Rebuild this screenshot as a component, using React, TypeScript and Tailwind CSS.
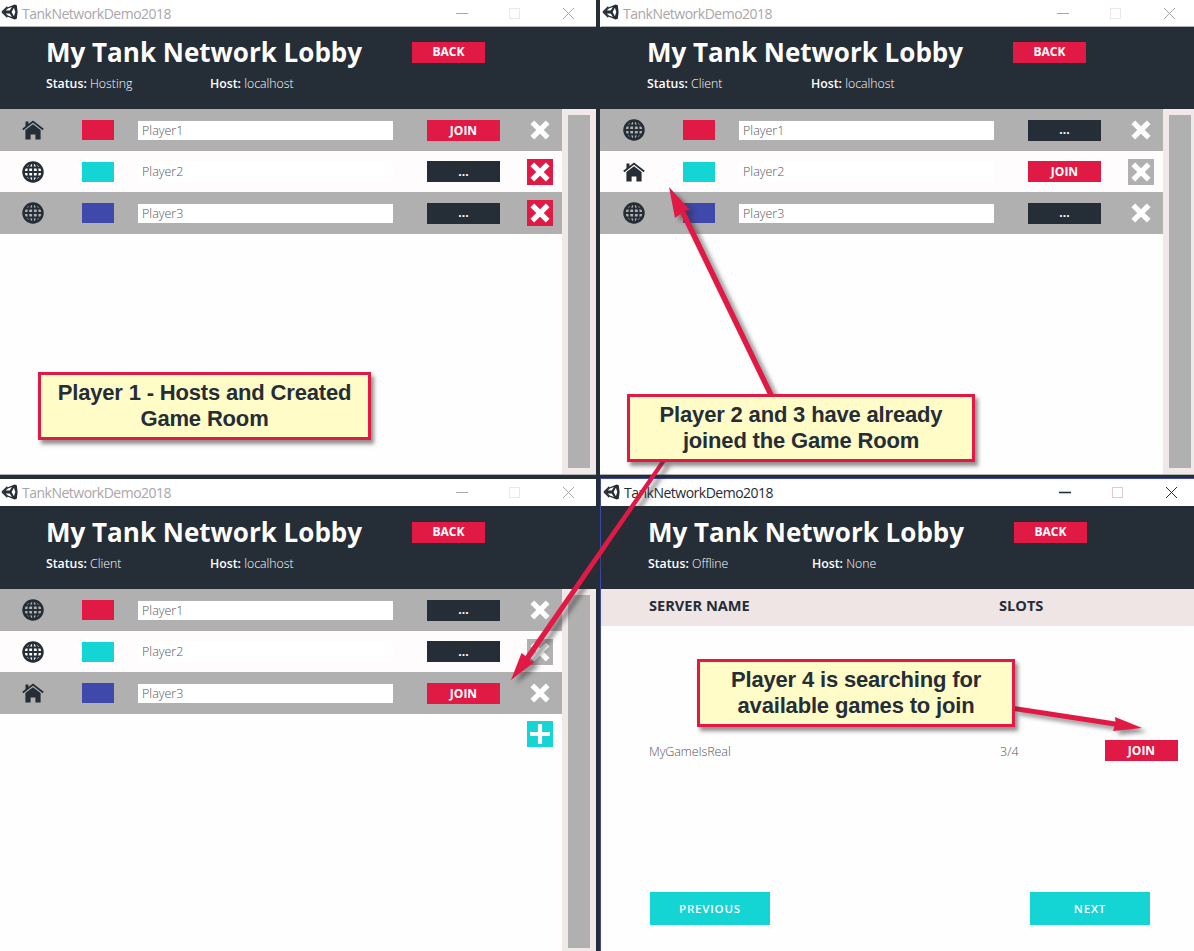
import type { ReactNode } from "react";

type Kind = "home" | "globe";
type Cross = "plain" | "red" | "gray";

interface Player {
  kind: Kind;
  color: string;
  name: string;
  action: "JOIN" | "...";
  cross: Cross;
}

function UnityIcon() {
  return (
    <svg viewBox="0 0 18 18" className="size-[18px] shrink-0" fill="none" stroke="#252d36">
      <path d="M1.6 9 6.2 4.6 13.6 1.6 15.8 2.2 16.6 9 15.8 15.8 13.6 16.4 6.2 13.4z" fill="#252d36" stroke="none" />
      <path d="M4.8 7.6 8.7 7.6 11 3.9 6.9 5.600z" fill="#fff" stroke="none" />
      <path d="M4.8 10.4 8.7 10.4 11 14.100 6.9 12.4z" fill="#fff" stroke="none" />
      <path d="M12.9 4.800 10.6 9 12.9 13.2 14.3 9z" fill="#fff" stroke="none" />
      <path d="M1 9 6.4 3.8M1 9 6.400 14.2" strokeWidth="1.4" />
    </svg>
  );
}

function HomeIcon() {
  return (
    <svg viewBox="0 0 22 20" className="block h-5 w-[22px]" fill="#252d36">
      <path d="M3.5 1.5h3v3l-3 2.600z" />
      <path d="M0.8 9.6 11 1.6l10.2 8" fill="none" stroke="#252d36" strokeWidth="1.9" />
      <path d="M11 4.3 18.6 10V19.5h-5.2v-5h-4.8v5H3.4V10z" />
    </svg>
  );
}

function GlobeIcon() {
  return (
    <svg viewBox="0 0 22 22" className="block size-[22px]" fill="none" stroke="#252d36" strokeWidth="1.8">
      <circle cx="11" cy="11" r="9.5" strokeWidth="2.5" />
      <path d="M11 1v20M1 11h20M2.500 6.500h17M2.500 15.500h17" />
      <ellipse cx="11" cy="11" rx="4.8" ry="9.4" />
    </svg>
  );
}

const crossBg: Record<Cross, string> = {
  plain: "",
  red: "bg-[#e01a45]",
  gray: "bg-[#b0b0b0]",
};

function CrossIcon({ kind }: { kind: Cross }) {
  return (
    <div className={`flex size-[26px] items-center justify-center ${crossBg[kind]}`}>
      <svg viewBox="0 0 20 20" className="size-5">
        <path d="M2.300 2.300 17.700 17.700M17.700 2.300 2.300 17.700" stroke="#fff" strokeWidth="5.2" />
      </svg>
    </div>
  );
}

function TitleBar({ active = false, line = false }: { active?: boolean; line?: boolean }) {
  return (
    <div
      className={`flex h-[27px] shrink-0 items-center bg-white pl-px ${line ? "border-b border-[#b0b0b0]" : ""} ${active ? "text-[#252d36]" : "text-[#aaa6a8]"}`}
    >
      <div className={`pb-[2px] ${active ? "ml-px" : ""}`}>
        <UnityIcon />
      </div>
      <span className="ml-[3px] flex-1 text-[14px] tracking-[-0.5px]">TankNetworkDemo2018</span>
      <svg
        viewBox="0 0 120 12"
        className={`mb-px h-3 w-[120px] ${active ? "mr-[16px]" : "mr-[21px]"}`}
        fill="none"
        stroke="currentColor"
      >
        <path d="M1 6.5h12" strokeWidth={active ? 1.6 : 1} />
        <rect x="54.5" y="1.5" width="10" height="10" stroke="#e0cccc" strokeDasharray={active ? undefined : "1 1"} />
        <path d="M108 1 119 12M119 1 108 12" />
      </svg>
    </div>
  );
}

function Header({ status, host }: { status: string; host: string }) {
  return (
    <div className="h-[82px] shrink-0 bg-[#252d36] pl-[46px] pt-[9px] text-white">
      <div className="flex h-8 items-center">
        <h1 className="w-[366px] whitespace-nowrap text-[26px] font-bold leading-8">My Tank Network Lobby</h1>
        <div className="flex h-[21px] w-[73px] items-center justify-center bg-[#e01a45] text-[12px] font-bold">BACK</div>
      </div>
      <div className="mt-[7px] flex text-[12.3px] leading-[18px]">
        <div className="w-[164px]">
          <span className="font-semibold">Status:</span> <span className="font-light">{status}</span>
        </div>
        <div>
          <span className="font-semibold">Host:</span> <span className="font-light">{host}</span>
        </div>
      </div>
    </div>
  );
}

function PlayerRow({ p, index }: { p: Player; index: number }) {
  const odd = index % 2 === 1;
  return (
    <div className={`flex items-center ${index === 1 ? "h-[41px]" : "h-[42px]"} ${odd ? "bg-[#fefcfc]" : "bg-[#b0b0b0]"}`}>
      <div className="ml-[22px] w-[60px]">{p.kind === "home" ? <HomeIcon /> : <GlobeIcon />}</div>
      <div className={`h-5 w-8 ${p.color}`} />
      <div className="ml-6 h-[19px] w-[255px] bg-white pl-[4px] text-[12.5px] font-light leading-[19px] text-[#57555c]">{p.name}</div>
      <div
        className={`ml-[34px] flex h-[21px] w-[73px] items-center justify-center text-[12px] font-bold text-white ${p.action === "JOIN" ? "bg-[#e01a45] pt-px" : "bg-[#252d36]"}`}
      >
        {p.action}
      </div>
      <div className="ml-[27px]">
        <CrossIcon kind={p.cross} />
      </div>
    </div>
  );
}

function PlayerList({ players, addSlot = false }: { players: Player[]; addSlot?: boolean }) {
  return (
    <div className="flex min-h-0 flex-1 bg-[#fefefe]">
      <div className="w-[562px] grow">
        {players.map((p, i) => (
          <PlayerRow key={p.name} p={p} index={i} />
        ))}
        {addSlot && (
          <div className="ml-[527px] mt-[7px] flex size-[26px] items-center justify-center bg-[#14d4d4]">
            <svg viewBox="0 0 22 22" className="size-[22px]">
              <path d="M11 1v20M1 11h20" stroke="#fff" strokeWidth="4.2" />
            </svg>
          </div>
        )}
      </div>
      <div className={`flex w-[34px] shrink-0 bg-[#f1e8e8] pl-[6px] pt-[6px] ${addSlot ? "pb-[3px]" : "pb-[6px]"}`}>
        <div className="w-[22px] bg-[#b0b0b0]" />
      </div>
    </div>
  );
}

function Callout({ className, children }: { className: string; children: ReactNode }) {
  return (
    <div
      className={`absolute h-[68px] border-[3px] border-[#e01a45] bg-[#fffcc8] pt-[5px] text-center font-['Liberation_Sans',sans-serif] text-[22px] font-bold leading-[26px] tracking-[-0.17px] text-[#252d36] shadow-[3px_4px_4px_rgba(60,50,50,0.55)] ${className}`}
    >
      {children}
    </div>
  );
}

const RED = "bg-[#e01a45]";
const CYAN = "bg-[#14d4d4]";
const BLUE = "bg-[#3f48ab]";

const hostPlayers: Player[] = [
  { kind: "home", color: RED, name: "Player1", action: "JOIN", cross: "plain" },
  { kind: "globe", color: CYAN, name: "Player2", action: "...", cross: "red" },
  { kind: "globe", color: BLUE, name: "Player3", action: "...", cross: "red" },
];
const secondPlayers: Player[] = [
  { kind: "globe", color: RED, name: "Player1", action: "...", cross: "plain" },
  { kind: "home", color: CYAN, name: "Player2", action: "JOIN", cross: "gray" },
  { kind: "globe", color: BLUE, name: "Player3", action: "...", cross: "plain" },
];
const thirdPlayers: Player[] = [
  { kind: "globe", color: RED, name: "Player1", action: "...", cross: "plain" },
  { kind: "globe", color: CYAN, name: "Player2", action: "...", cross: "gray" },
  { kind: "home", color: BLUE, name: "Player3", action: "JOIN", cross: "plain" },
];

export default function App() {
  return (
    <div className="relative grid h-[951px] w-[1194px] grid-cols-[596px_594px] grid-rows-[475px_472px] gap-1 overflow-hidden bg-[#252d36] font-['Open_Sans',sans-serif]">
      <section className="flex flex-col overflow-hidden border-b border-[#b0b0b0]">
        <TitleBar line />
        <Header status="Hosting" host="localhost" />
        <PlayerList players={hostPlayers} />
      </section>

      <section className="flex flex-col overflow-hidden border-b border-[#b0b0b0]">
        <div className="flex w-[597px] flex-1 flex-col bg-[#252d36]">
          <div className="bg-white pl-px">
            <TitleBar line />
          </div>
          <div className="pl-px">
            <Header status="Client" host="localhost" />
          </div>
          <div className="flex flex-1 bg-[linear-gradient(#b0b0b0_42px,#fefcfc_42px,#fefcfc_83px,#b0b0b0_83px,#b0b0b0_125px,#fefefe_125px)] pl-px">
            <PlayerList players={secondPlayers} />
          </div>
        </div>
      </section>

      <section className="flex flex-col overflow-hidden">
        <TitleBar />
        <div className="shrink-0 bg-[#252d36] pt-px">
          <Header status="Client" host="localhost" />
        </div>
        <PlayerList players={thirdPlayers} addSlot />
      </section>

      <section className="relative flex flex-col border-l border-[#3f48ab] bg-[#fefefe] shadow-[0_-1px_0_#3f48ab]">
        <TitleBar active />
        <div className="bg-[#252d36] pl-px pt-px">
          <Header status="Offline" host="None" />
        </div>
        <div className="flex h-[37px] items-center bg-[#efe5e5] pb-[4px] pl-12 text-[14.6px] font-bold text-[#252d36]">
          <span className="w-[350px]">SERVER NAME</span>
          <span>SLOTS</span>
        </div>
        <div className="mt-[114px] flex h-[21px] items-center pl-12 text-[12.5px] font-light text-[#57555c]">
          <span className="w-[351px] pt-[3px] tracking-[-0.1px]">MyGameIsReal</span>
          <span className="w-[105px] pt-[3px]">3/4</span>
          <span className="flex h-[21px] w-[73px] items-center justify-center bg-[#e01a45] pt-px text-[12px] font-bold text-white">JOIN</span>
        </div>
        <div className="mt-[131px] flex gap-[260px] pl-[49px] text-[11.5px] font-semibold tracking-[0.8px] text-white">
          <div className="flex h-[33px] w-[120px] items-center justify-center bg-[#14d4d4]">PREVIOUS</div>
          <div className="flex h-[33px] w-[120px] items-center justify-center bg-[#14d4d4]">NEXT</div>
        </div>
      </section>

      <svg
        viewBox="0 0 1194 951"
        className="absolute inset-0 h-[951px] w-[1194px] drop-shadow-[5px_4px_2px_rgba(50,45,50,0.5)]"
        fill="#e01a45"
      >
        <path d="M669 187 690 210 685 210.500 773.5 394 768.5 396 680.500 214 675 218z" />
        <path d="M511 680 521.5 653 525.500 656 661 461 666 461 529.500 660 534.500 662z" />
        <path d="M1142 728 1115 717 1115.500 721.500 1014 706 1014 711 1114.500 726.500 1113 731z" />
      </svg>

      <Callout className="left-[38px] top-[372px] w-[333px]">
        Player 1 - Hosts and Created
        <br />
        Game Room
      </Callout>
      <Callout className="left-[627px] top-[394px] w-[348px]">
        Player 2 and 3 have already
        <br />
        joined the Game Room
      </Callout>
      <Callout className="left-[697px] top-[659px] w-[318px]">
        Player 4 is searching for
        <br />
        available games to join
      </Callout>
    </div>
  );
}
